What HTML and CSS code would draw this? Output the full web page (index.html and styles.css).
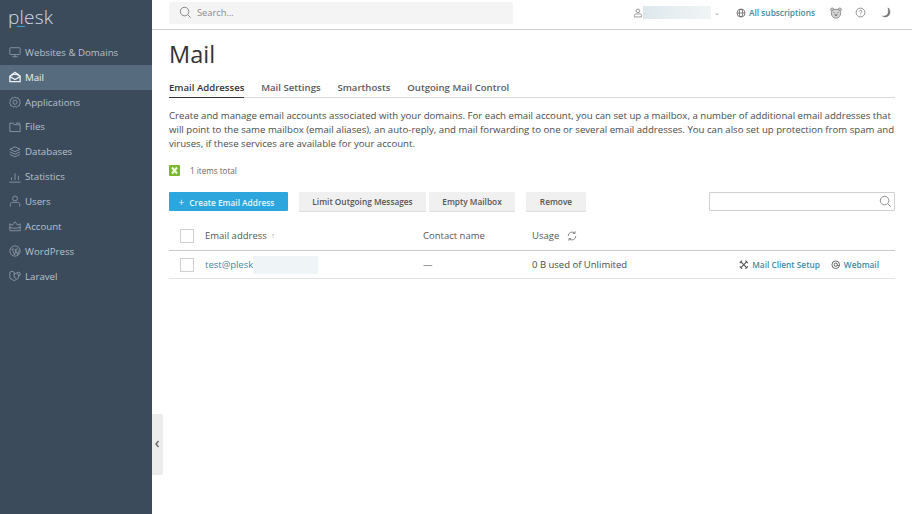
FILE: index.html
```html
<!DOCTYPE html>
<html lang="en">
<head>
<meta charset="utf-8">
<title>Mail</title>
<link rel="stylesheet" href="styles.css">
</head>
<body>
<div class="app">
  <aside class="sidebar">
    <div class="logo">plesk<i class="logo-bar"></i></div>
    <nav class="nav">
      <a class="nav-item"><svg class="ni" viewBox="0 0 14 14"><rect x="1" y="2" width="12" height="8" rx=".8"/><path d="M4 12.500h6M7 10v2.500"/></svg>Websites &amp; Domains</a>
      <a class="nav-item active"><svg class="ni" viewBox="0 0 14 14"><path d="M1 6 7 1.500 13 6v6.500H1z"/><path d="M1 6.500 7 10l6-3.500"/><path d="M3.500 6.200V4h7v2.200"/></svg>Mail</a>
      <a class="nav-item"><svg class="ni" viewBox="0 0 14 14"><path d="M7 1l1.500 1.300 1.900-.3.700 1.800 1.700.9-.4 1.900L13.500 8l-1.300 1.400-.1 1.900-1.900.3-1.200 1.500L7 12.200l-2 .9-1.200-1.500-1.900-.3-.1-1.900L.5 8l1.100-1.400-.4-1.900 1.700-.9.700-1.800 1.900.3z"/><circle cx="7" cy="7.300" r="2.400"/></svg>Applications</a>
      <a class="nav-item"><svg class="ni" viewBox="0 0 14 14"><path d="M1 2.500h4l1 1.800h7v8H1z"/><path d="M8 2.500h5"/></svg>Files</a>
      <a class="nav-item"><svg class="ni" viewBox="0 0 14 14"><path d="M7 1 13 3.800 7 6.600 1 3.800z"/><path d="M1 6.800 7 9.600l6-2.800"/><path d="M1 9.800 7 12.600l6-2.800"/></svg>Databases</a>
      <a class="nav-item"><svg class="ni" viewBox="0 0 14 14"><path d="M3 10.500V7.500M7 10.500V2.500M11 10.500V5.500M.5 13h13"/></svg>Statistics</a>
      <a class="nav-item"><svg class="ni" viewBox="0 0 14 14"><circle cx="7" cy="4" r="2.800"/><path d="M1.500 13.500v-2.500c0-1.600 1.200-2.500 2.700-2.500h5.600c1.500 0 2.700.9 2.700 2.500v2.500"/></svg>Users</a>
      <a class="nav-item"><svg class="ni" viewBox="0 0 14 14"><path d="M1 4.500 4 6l3-4 3 4 3-1.500v8H1z"/><path d="M1 8.500c3 1.500 9 1.500 12 0"/></svg>Account</a>
      <a class="nav-item"><svg class="ni" viewBox="0 0 14 14"><circle cx="7" cy="7" r="6"/><path d="M3 4.800h2.600M8.200 4.800h2.600M4 5l2.400 6.600L8 7 6.800 5M7.600 5l2.400 6.400 1.600-5"/></svg>WordPress</a>
      <a class="nav-item"><svg class="ni" viewBox="0 0 14 14"><path d="M1 2.500 3.500 1.500 6 2.500v6l2.500 1.500M1 2.500v7l5 3 5-3V7M6 5l2.500-1.500L11 5v2l2-1V3.500l-2-1-2 1"/></svg>Laravel</a>
    </nav>
  </aside>
  <div class="main">
    <header class="topbar">
      <div class="search">
        <svg class="search-icon" viewBox="0 0 14 14"><circle cx="6" cy="6" r="4.600"/><path d="m9.500 9.500 3 3"/></svg>
        <span>Search...</span>
      </div>
      <div class="top-right">
        <svg class="top-user" viewBox="0 0 14 14"><circle cx="7" cy="4" r="2.500"/><path d="M2 12.500v-2c0-1.400 1-2.200 2.400-2.200h5.200c1.400 0 2.400.8 2.400 2.200v2z"/></svg>
        <span class="blur-user"></span>
        <span class="caret">⌄</span>
        <a class="subs"><svg class="globe" viewBox="0 0 14 14"><circle cx="7" cy="7" r="5.600"/><ellipse cx="7" cy="7" rx="2.400" ry="5.600"/><path d="M1.400 7h11.200"/></svg>All subscriptions</a>
        <svg class="t-icon bear" viewBox="0 0 14 14"><circle cx="2.600" cy="3" r="1.800"/><circle cx="11.400" cy="3" r="1.800"/><path d="M2.500 4C.8 7 1.500 13 7 13s6.200-6 4.500-9C9.500 2.200 4.500 2.200 2.500 4z"/><path class="bear-face" d="M5.500 9 7 10.500 8.500 9zM4 6.500h1.500M8.500 6.500H10"/></svg>
        <svg class="t-icon help" viewBox="0 0 14 14"><circle cx="7" cy="7" r="5.600"/><path d="M5.400 5.600C5.500 3.800 8.700 3.800 8.700 5.600 8.700 6.900 7 6.900 7 8.400M7 9.600v1"/></svg>
        <svg class="t-icon moon" viewBox="0 0 14 14"><path d="M9 1c3 2.500 3.500 8 0 10.500-2 1.500-5 1.500-7 0 3.500 1 7-1.500 7.300-5C9.400 4.500 9.300 2.500 9 1z"/></svg>
      </div>
    </header>
    <main class="content">
      <h1 class="title">Mail</h1>
      <div class="tabs">
        <a class="tab current">Email Addresses</a>
        <a class="tab">Mail Settings</a>
        <a class="tab">Smarthosts</a>
        <a class="tab">Outgoing Mail Control</a>
      </div>
      <p class="desc">Create and manage email accounts associated with your domains. For each email account, you can set up a mailbox, a number of additional email addresses that will point to the same mailbox (email aliases), an auto-reply, and mail forwarding to one or several email addresses. You can also set up protection from spam and viruses, if these services are available for your account.</p>
      <div class="total">
        <svg class="xls" viewBox="0 0 11 11"><rect width="11" height="11" rx="1"/><path d="M3 2.500 8 8.500M8 2.500 3 8.500"/></svg>
        <span>1 items total</span>
      </div>
      <div class="toolbar">
        <button class="btn primary"><span class="plus">+</span>Create Email Address</button>
        <button class="btn limit">Limit Outgoing Messages</button>
        <button class="btn empty">Empty Mailbox</button>
        <button class="btn remove">Remove</button>
        <div class="filter"><svg viewBox="0 0 14 14"><circle cx="6" cy="6" r="4.600"/><path d="m9.500 9.500 3 3"/></svg></div>
      </div>
      <div class="row head">
        <span class="check"></span>
        <span class="c-email">Email address <small class="sort">↑</small></span>
        <span class="c-contact">Contact name</span>
        <span class="c-usage">Usage <svg class="refresh" viewBox="0 0 14 14"><path d="M2.500 7a4.600 4.600 0 0 1 7.800-3.300M11.500 7a4.600 4.600 0 0 1-7.800 3.300"/><path d="M10.600 1.500v2.500H8M3.400 12.500V10H6"/></svg></span>
      </div>
      <div class="row body">
        <span class="check"></span>
        <span class="c-email"><a class="link">test@plesk</a><i class="blur-mail"></i></span>
        <span class="c-contact">—</span>
        <span class="c-usage">0 B used of Unlimited</span>
        <span class="actions">
          <a class="link act"><svg class="tools" viewBox="0 0 14 14"><path d="M2.500 2.500l9 9M11.500 2.500l-9 9"/><path d="M1 4.500 4.500 1M9.500 13 13 9.500M9.500 1 13 4.500M1 9.500 4.500 13"/></svg>Mail Client Setup</a>
          <a class="link act"><svg class="web" viewBox="0 0 14 14"><circle cx="7" cy="7" r="5.600"/><circle cx="7" cy="7" r="2.400"/><path d="M9.400 7c0 2 3 1.500 3.200 0"/></svg>Webmail</a>
        </span>
      </div>
    </main>
  </div>
  <div class="collapse"><svg viewBox="0 0 6 8"><path d="M4.500 1 2 4l2.500 3"/></svg></div>
</div>
</body>
</html>
```

FILE: styles.css
```css
* { box-sizing: border-box; }
html, body { margin: 0; height: 100%; }
body { font-family: "Open Sans", "Liberation Sans", sans-serif; color: #4a4a4a; background: #fff; }
svg { fill: none; stroke: currentColor; stroke-width: 1; flex: none; }
button { font-family: inherit; }

.app { position: relative; display: flex; width: 912px; height: 514px; overflow: hidden; }

.sidebar { width: 152px; flex: none; background: #3c4b5c; color: #b7c1ca; }
.logo { position: relative; width: max-content; height: 40px; margin-left: 8px; padding-top: 3px; font-size: 19px; line-height: 28px; letter-spacing: .2px; color: #d3dae0; font-weight: 300; }
.logo-bar { position: absolute; left: 9px; top: 26px; width: 8px; height: 1px; background: #2fa5d6; }
.nav { display: flex; flex-direction: column; }
.nav-item { display: flex; align-items: center; gap: 4px; height: 24.850px; padding-left: 9px; font-size: 9.700px; }
.nav-item.active { background: #566b7e; color: #eef1f4; }
.nav-item.active .ni { stroke-width: 1.500; opacity: 1; }
.ni { width: 12px; height: 12px; opacity: .75; stroke-width: .9; }

.main { flex: 1; display: flex; flex-direction: column; min-width: 0; }
.topbar { display: flex; align-items: center; justify-content: space-between; height: 30px; flex: none; padding: 1px 17px 5px; border-bottom: 1px solid #d2d2d2; }
.search { display: flex; align-items: center; gap: 5px; width: 344px; height: 22px; padding-left: 10px; background: #f4f4f4; border-radius: 2px; color: #8a8a8a; font-size: 9.300px; }
.search-icon { width: 13px; height: 13px; color: #7c7c7c; }
.top-right { display: flex; align-items: center; }
.top-user { width: 10px; height: 10px; margin-left: 1px; color: #777; }
.blur-user { width: 68px; height: 13px; background: linear-gradient(90deg, #dde8ec, #e9f0f2 60%, #f0f4f5); }
.caret { width: 9px; margin-left: 1px; font-size: 7px; line-height: 8px; color: #999; text-align: center; }
.subs { display: flex; align-items: center; gap: 3px; margin-left: 15px; font-size: 8.300px; font-weight: 600; color: #3d8aa0; }
.globe { width: 10px; height: 10px; color: #555; }
.t-icon { width: 11px; height: 11px; color: #777; }
.bear { width: 12px; height: 12px; margin-left: 15px; fill: #d5d5d5; stroke: #808080; }
.bear-face { fill: #808080; }
.help { margin-left: 13px; }
.moon { margin-left: 15px; margin-right: 3px; color: #666; fill: #777; stroke-width: .6; }

.content { flex: 1; padding: 0 17px; }
.title { margin: 8px 0 0; font-size: 23.500px; line-height: 32px; font-weight: 400; color: #333; }
.tabs { display: flex; gap: 16.800px; margin-top: 11px; height: 17px; border-bottom: 1px solid #d8d8d8; }
.tab { height: 17px; font-size: 9.600px; line-height: 14px; font-weight: 600; color: #5b5b5b; }
.tab.current { color: #333; border-bottom: 1px solid #333; }
.desc { margin: 11px 0 0; font-size: 9.650px; line-height: 14px; color: #4b4b4b; }
.total { display: flex; align-items: center; gap: 10px; margin-top: 12px; height: 14px; font-size: 8.100px; color: #666; }
.xls { width: 11px; height: 11px; color: #7cb82f; }
.xls rect { fill: #7cb82f; stroke: none; }
.xls path { stroke: #f2f8e6; stroke-width: 2; }
.toolbar { display: flex; align-items: center; margin-top: 15px; height: 19px; }
.btn { height: 19px; border: 0; padding: 0; font-size: 8.300px; font-weight: 600; color: #555; background: #f0f0f0; border-radius: 1px; box-shadow: 0 1px 0 #ddd; }
.btn.primary { width: 119px; margin-right: 11px; padding-right: 4px; color: #e9f6fb; background: #2ca6dc; box-shadow: none; }
.plus { margin-right: 5px; font-weight: 400; font-size: 10px; }
.limit { width: 127px; margin-right: 3px; }
.empty { width: 86px; margin-right: 11px; }
.remove { width: 60px; }
.filter { display: flex; align-items: center; justify-content: flex-end; width: 186px; height: 19px; margin-left: auto; padding-right: 2px; border: 1px solid #d0d0d0; border-radius: 1px; }
.filter svg { width: 13px; height: 13px; color: #888; }

.row { display: flex; align-items: center; font-size: 9.500px; }
.row.head { height: 29px; margin-top: 11px; padding-bottom: 1px; border-bottom: 1px solid #c9c9c9; color: #555; }
.row.body { height: 28px; border-bottom: 1px solid #e2e2e2; }
.check { width: 14px; height: 14px; margin-left: 11px; border: 1px solid #cfcfcf; background: #fff; flex: none; }
.c-email { display: flex; align-items: center; width: 218px; margin-left: 11px; white-space: pre; }
.sort { font-size: 7px; color: #888; margin-left: 2px; }
.c-contact { width: 109px; }
.c-usage { display: flex; align-items: center; gap: 7px; width: 180px; }
.refresh { width: 12px; height: 12px; color: #777; }
.link { color: #3d8aa0; }
.blur-mail { width: 65px; height: 18px; background: #eff5f7; }
.actions { display: flex; gap: 11px; margin-left: auto; margin-right: 16px; }
.act { display: flex; align-items: center; gap: 3.500px; font-size: 8.300px; font-weight: 600; }
.tools, .web { width: 9.500px; height: 9.500px; color: #555; stroke-width: 1.300; }
.tools { stroke-width: 1.700; }

.collapse { position: absolute; left: 152px; top: 414px; display: flex; align-items: center; justify-content: center; width: 11px; height: 61px; padding: 0 2px 1px 0; background: #ececec; border-radius: 0 2px 2px 0; color: #666; }
.collapse svg { width: 6px; height: 8px; stroke-width: 1.400; }
```
